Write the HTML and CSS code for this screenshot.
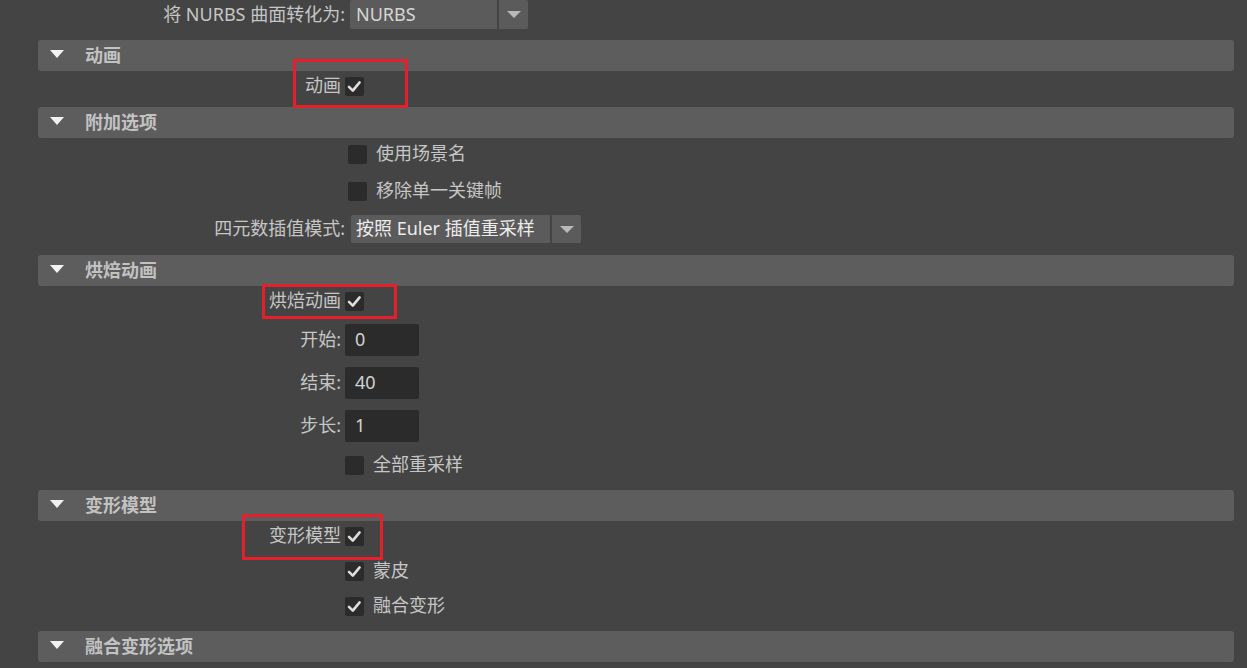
FILE: index.html
```html
<!DOCTYPE html>
<html lang="zh-CN">
<head>
<meta charset="utf-8">
<title>导出选项</title>
<link rel="stylesheet" href="styles.css">
</head>
<body>
<div class="panel">
  <div class="row top">
    <span class="label wide">将 NURBS 曲面转化为:</span>
    <div class="combo short"><span class="combo-main">NURBS</span><span class="combo-arrow"><i class="caret"></i></span></div>
  </div>

  <section class="frame">
    <div class="frame-head"><i class="tri"></i><span>动画</span></div>
    <div class="frame-body b-anim">
      <div class="row">
        <span class="label">动画</span>
        <span class="cb"><svg viewBox="0 0 19 19"><rect width="19" height="19" rx="2"/><polyline points="4,9.8 7.8,13.6 14.6,5.4"/></svg></span>
        <span class="mark m1"></span>
      </div>
    </div>
  </section>

  <section class="frame">
    <div class="frame-head"><i class="tri"></i><span>附加选项</span></div>
    <div class="frame-body b-extra">
      <div class="row ind">
        <span class="label"></span>
        <span class="cb off"><svg viewBox="0 0 19 19"><rect width="19" height="19" rx="2"/></svg></span>
        <span class="txt">使用场景名</span>
      </div>
      <div class="row ind">
        <span class="label"></span>
        <span class="cb off"><svg viewBox="0 0 19 19"><rect width="19" height="19" rx="2"/></svg></span>
        <span class="txt">移除单一关键帧</span>
      </div>
      <div class="row combo-row">
        <span class="label wide">四元数插值模式:</span>
        <div class="combo long"><span class="combo-main bright">按照 Euler 插值重采样</span><span class="combo-arrow"><i class="caret"></i></span></div>
      </div>
    </div>
  </section>

  <section class="frame">
    <div class="frame-head"><i class="tri"></i><span>烘焙动画</span></div>
    <div class="frame-body b-bake">
      <div class="row">
        <span class="label">烘焙动画</span>
        <span class="cb"><svg viewBox="0 0 19 19"><rect width="19" height="19" rx="2"/><polyline points="4,9.8 7.8,13.6 14.6,5.4"/></svg></span>
        <span class="mark m2"></span>
      </div>
      <div class="row field-row">
        <span class="label">开始:</span>
        <span class="field">0</span>
      </div>
      <div class="row field-row">
        <span class="label">结束:</span>
        <span class="field">40</span>
      </div>
      <div class="row field-row">
        <span class="label">步长:</span>
        <span class="field">1</span>
      </div>
      <div class="row">
        <span class="label"></span>
        <span class="cb off"><svg viewBox="0 0 19 19"><rect width="19" height="19" rx="2"/></svg></span>
        <span class="txt">全部重采样</span>
      </div>
    </div>
  </section>

  <section class="frame">
    <div class="frame-head"><i class="tri"></i><span>变形模型</span></div>
    <div class="frame-body b-deform">
      <div class="row">
        <span class="label">变形模型</span>
        <span class="cb"><svg viewBox="0 0 19 19"><rect width="19" height="19" rx="2"/><polyline points="4,9.8 7.8,13.6 14.6,5.4"/></svg></span>
        <span class="mark m3"></span>
      </div>
      <div class="row">
        <span class="label"></span>
        <span class="cb"><svg viewBox="0 0 19 19"><rect width="19" height="19" rx="2"/><polyline points="4,9.8 7.8,13.6 14.6,5.4"/></svg></span>
        <span class="txt">蒙皮</span>
      </div>
      <div class="row">
        <span class="label"></span>
        <span class="cb"><svg viewBox="0 0 19 19"><rect width="19" height="19" rx="2"/><polyline points="4,9.8 7.8,13.6 14.6,5.4"/></svg></span>
        <span class="txt">融合变形</span>
      </div>
    </div>
  </section>

  <section class="frame">
    <div class="frame-head"><i class="tri"></i><span>融合变形选项</span></div>
    <div class="frame-body b-blend">
      <div class="row">
        <span class="label"></span>
        <span class="cb off"><svg viewBox="0 0 19 19"><rect width="19" height="19" rx="2"/></svg></span>
      </div>
    </div>
  </section>
</div>
</body>
</html>
```

FILE: styles.css
```css
html, body {
  margin: 0;
  padding: 0;
  height: 100%;
  overflow: hidden;
  background: #444444;
}

body {
  font-family: "Noto Sans", "Noto Sans CJK SC", "Liberation Sans", sans-serif;
  font-size: 18px;
  color: #c6c6c6;
}

.panel {
  display: flex;
  flex-direction: column;
  padding: 0 13px 0 38px;
}

.row {
  position: relative;
  display: flex;
  align-items: center;
  height: 30px;
  gap: 4px;
}

.row.top {
  height: 29px;
  margin-bottom: 11px;
  gap: 5px;
}

.label {
  width: 303px;
  flex: none;
  text-align: right;
  white-space: nowrap;
  line-height: 1.2;
}

.label.wide {
  width: 307px;
}

.txt {
  margin-left: 5px;
  white-space: nowrap;
  line-height: 1.2;
}

.row.ind {
  padding-left: 3px;
}

.cb {
  width: 19px;
  height: 19px;
  flex: none;
  display: block;
}

.cb svg {
  display: block;
  width: 19px;
  height: 19px;
}

.cb rect {
  fill: #2b2b2b;
}

.cb polyline {
  fill: none;
  stroke: #dedede;
  stroke-width: 2.6;
  stroke-linecap: round;
  stroke-linejoin: round;
}

/* combo boxes */
.combo {
  display: flex;
  height: 29px;
  gap: 2px;
}

.combo.short .combo-main {
  width: 141px;
}

.combo.long {
  height: 28px;
}

.combo.long .combo-main {
  width: 194px;
}

.combo-row {
  height: 32px;
  gap: 6px;
}

.combo-main {
  display: flex;
  align-items: center;
  background: #5b5b5b;
  border-radius: 2px 0 0 2px;
  padding-left: 6px;
  color: #d6d6d6;
  white-space: nowrap;
  line-height: 1.2;
}

.combo-main.bright {
  color: #ececec;
  padding-left: 5px;
}

.combo-arrow {
  width: 29px;
  display: flex;
  align-items: center;
  justify-content: center;
  background: #5b5b5b;
  border-radius: 0 2px 2px 0;
}

.caret {
  display: block;
  width: 0;
  height: 0;
  border-left: 7px solid transparent;
  border-right: 7px solid transparent;
  border-top: 7px solid #b9b9b9;
}

/* frames */
.frame-head {
  height: 31px;
  display: flex;
  align-items: center;
  background: #5d5d5d;
  border-radius: 3px;
  padding-left: 12px;
  gap: 21px;
  font-weight: 700;
  color: #c2c2c2;
}

.frame-head span {
  line-height: 1.2;
}

.tri {
  display: block;
  width: 0;
  height: 0;
  border-left: 7.5px solid transparent;
  border-right: 7.5px solid transparent;
  border-top: 8px solid #f2f2f2;
  margin-bottom: 3px;
}

.frame-body {
  display: flex;
  flex-direction: column;
}

.b-anim {
  padding-bottom: 6px;
}

.b-extra {
  padding: 1px 0 10px;
  gap: 7px;
}

.b-bake {
  padding-bottom: 10px;
  gap: 5px;
}

.b-deform {
  padding-bottom: 10px;
  gap: 5px;
}

.b-blend {
  padding-top: 0;
}

.field-row {
  height: 38px;
}

.field {
  width: 64px;
  height: 32px;
  flex: none;
  display: flex;
  align-items: center;
  padding-left: 10px;
  background: #2b2b2b;
  border-radius: 2px;
  color: #d2d2d2;
  line-height: 1.2;
}

/* red highlight annotations */
.mark {
  position: absolute;
  border: 3px solid #e5202a;
  box-sizing: border-box;
  z-index: 2;
  pointer-events: none;
}

.m1 {
  left: 255px;
  top: -12px;
  width: 115px;
  height: 49px;
}

.m2 {
  left: 224px;
  top: -2px;
  width: 135px;
  height: 35px;
}

.m3 {
  left: 204px;
  top: -7px;
  width: 141px;
  height: 46px;
}
```
